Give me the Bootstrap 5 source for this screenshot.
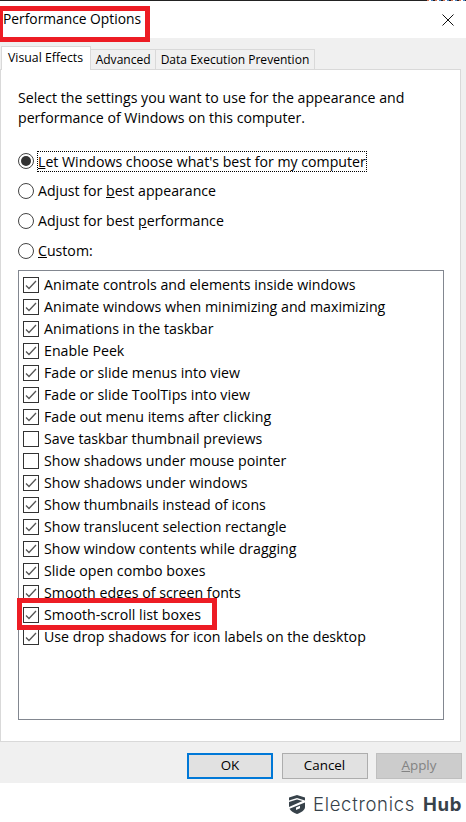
<!DOCTYPE html>
<html lang="en">
<head>
<meta charset="utf-8">
<link rel="stylesheet" href="https://cdn.jsdelivr.net/npm/bootstrap@5.3.0/dist/css/bootstrap.min.css">
<style>
html,body{height:100%;}
body{background:#fff;font-family:"Open Sans","Noto Sans",sans-serif;font-size:14px;color:#000;overflow:hidden;}
.win-frame{width:466px;height:822px;border-top:1px solid #222;}
.top-noise{position:absolute;left:427px;top:-1px;width:39px;height:1px;background:repeating-linear-gradient(90deg,#d9785a 0 2px,#fff 2px 4px,#4a86c8 4px 6px,#222 6px 8px);}
.win-title{height:37px;padding:0 12px 0 3px;font-size:13.8px;}
.win-body{height:745px;background:#f0f0f0;padding:8px 0 0 0;width:466px;}
.tab-strip{height:23px;padding-left:1px;}
.win-tab{border:1px solid #d9d9d9;border-bottom:0;padding:0 4.500px;height:20px;margin-top:3px;margin-left:-1px;line-height:19px;font-size:12.050px;background:#f0f0f0;white-space:nowrap;}
.win-tab.on{background:#fff;height:24px;margin-top:0;margin-left:0;padding:0 7px 0 6px;line-height:21px;font-size:12.300px;position:relative;z-index:1;}
.tab-panel{background:#fff;border:1px solid #d9d9d9;height:673px;margin-top:0;padding:18px 17px 0 17px;width:461px;}
.intro{line-height:20px;font-size:14.15px;margin:0 0 18px;}
.radio-row{height:30px;font-size:14.15px;gap:4px;}
.radio-dot{width:16px;height:16px;border:1px solid #444;border-radius:50%;flex:none;display:flex;align-items:center;justify-content:center;}
.radio-dot.on i{display:block;width:10px;height:10px;border-radius:50%;background:#333;}
.focus-box{outline:1px dotted #000;line-height:19px;}
.u{text-decoration:underline;}
.opts-box{border:1px solid #828790;height:450px;margin-top:4px;width:426px;padding:3px 4px;background:#fff;}
.opt-row{height:22px;gap:5px;font-size:14.2px;white-space:nowrap;}
.chk{width:16px;height:16px;flex:none;display:block;}
.action-row{gap:8.500px;padding:11px 4px 0 0;justify-content:flex-end;width:466px;}
.win-btn{width:86px;height:26px;background:#e1e1e1;border:1px solid #adadad;font-size:13.4px;line-height:23px;text-align:center;}
.win-btn.def{border:2px solid #0078d7;line-height:21px;}
.win-btn.off{background:#cccccc;border-color:#bfbfbf;color:#838383;}
.brand-bar{position:absolute;right:4px;bottom:6px;gap:8px;color:#37424a;font-family:"Inter","Noto Sans",sans-serif;font-size:18.5px;line-height:24px;letter-spacing:.7px;font-weight:300;}
.brand-bar b{font-weight:700;margin-left:2px;}
.marker{position:absolute;border:5px solid #ed1c24;pointer-events:none;}
.mark-a{left:0;top:5px;width:150px;height:36px;border-left-width:3px;}
.mark-b{left:17px;top:597px;width:200px;height:32px;}
</style>
</head>
<body>
<svg width="0" height="0" class="position-absolute"><defs>
<g id="ck"><rect x=".5" y=".5" width="15" height="15" fill="#fff" stroke="#333"/><path d="M3 8.500l3 3 7-7.500" fill="none" stroke="#555" stroke-width="1.300"/></g>
</defs></svg>
<div class="win-frame position-relative">
  <div class="top-noise"></div>
  <div class="win-title d-flex align-items-center justify-content-between">
    <span>Performance Options</span>
    <svg width="12" height="12" viewBox="0 0 12 12"><path d="M.5.500l11 11M11.500.500l-11 11" stroke="#111" stroke-width="1" fill="none"/></svg>
  </div>
  <div class="win-body">
    <div class="tab-strip d-flex align-items-start">
      <div class="win-tab on">Visual Effects</div>
      <div class="win-tab">Advanced</div>
      <div class="win-tab">Data Execution Prevention</div>
    </div>
    <div class="tab-panel">
      <p class="intro">Select the settings you want to use for the appearance and<br>performance of Windows on this computer.</p>
      <div class="radio-row d-flex align-items-center"><span class="radio-dot on"><i></i></span><span class="focus-box"><span class="u">L</span>et Windows choose what's best for my computer</span></div>
      <div class="radio-row d-flex align-items-center"><span class="radio-dot"></span><span>Adjust for <span class="u">b</span>est appearance</span></div>
      <div class="radio-row d-flex align-items-center"><span class="radio-dot"></span><span>Adjust for best <span class="u">p</span>erformance</span></div>
      <div class="radio-row d-flex align-items-center"><span class="radio-dot"></span><span><span class="u">C</span>ustom:</span></div>
      <div class="opts-box">
        <div class="opt-row d-flex align-items-center"><svg class="chk" viewBox="0 0 16 16"><use href="#ck"/></svg><span>Animate controls and elements inside windows</span></div>
        <div class="opt-row d-flex align-items-center"><svg class="chk" viewBox="0 0 16 16"><use href="#ck"/></svg><span>Animate windows when minimizing and maximizing</span></div>
        <div class="opt-row d-flex align-items-center"><svg class="chk" viewBox="0 0 16 16"><use href="#ck"/></svg><span>Animations in the taskbar</span></div>
        <div class="opt-row d-flex align-items-center"><svg class="chk" viewBox="0 0 16 16"><use href="#ck"/></svg><span>Enable Peek</span></div>
        <div class="opt-row d-flex align-items-center"><svg class="chk" viewBox="0 0 16 16"><use href="#ck"/></svg><span>Fade or slide menus into view</span></div>
        <div class="opt-row d-flex align-items-center"><svg class="chk" viewBox="0 0 16 16"><use href="#ck"/></svg><span>Fade or slide ToolTips into view</span></div>
        <div class="opt-row d-flex align-items-center"><svg class="chk" viewBox="0 0 16 16"><use href="#ck"/></svg><span>Fade out menu items after clicking</span></div>
        <div class="opt-row d-flex align-items-center"><svg class="chk" viewBox="0 0 16 16"><rect x=".5" y=".5" width="15" height="15" fill="#fff" stroke="#333"/></svg><span>Save taskbar thumbnail previews</span></div>
        <div class="opt-row d-flex align-items-center"><svg class="chk" viewBox="0 0 16 16"><rect x=".5" y=".5" width="15" height="15" fill="#fff" stroke="#333"/></svg><span>Show shadows under mouse pointer</span></div>
        <div class="opt-row d-flex align-items-center"><svg class="chk" viewBox="0 0 16 16"><use href="#ck"/></svg><span>Show shadows under windows</span></div>
        <div class="opt-row d-flex align-items-center"><svg class="chk" viewBox="0 0 16 16"><use href="#ck"/></svg><span>Show thumbnails instead of icons</span></div>
        <div class="opt-row d-flex align-items-center"><svg class="chk" viewBox="0 0 16 16"><use href="#ck"/></svg><span>Show translucent selection rectangle</span></div>
        <div class="opt-row d-flex align-items-center"><svg class="chk" viewBox="0 0 16 16"><use href="#ck"/></svg><span>Show window contents while dragging</span></div>
        <div class="opt-row d-flex align-items-center"><svg class="chk" viewBox="0 0 16 16"><use href="#ck"/></svg><span>Slide open combo boxes</span></div>
        <div class="opt-row d-flex align-items-center"><svg class="chk" viewBox="0 0 16 16"><use href="#ck"/></svg><span>Smooth edges of screen fonts</span></div>
        <div class="opt-row d-flex align-items-center"><svg class="chk" viewBox="0 0 16 16"><use href="#ck"/></svg><span>Smooth-scroll list boxes</span></div>
        <div class="opt-row d-flex align-items-center"><svg class="chk" viewBox="0 0 16 16"><use href="#ck"/></svg><span>Use drop shadows for icon labels on the desktop</span></div>
      </div>
    </div>
    <div class="action-row d-flex">
      <div class="win-btn def">OK</div>
      <div class="win-btn">Cancel</div>
      <div class="win-btn off"><span class="u">A</span>pply</div>
    </div>
  </div>
  <div class="marker mark-a"></div>
  <div class="marker mark-b"></div>
</div>
<div class="brand-bar d-flex align-items-center">
  <svg width="16" height="19" viewBox="0 0 16 19"><path d="M8 0l8 2.500v3L8 3 0 5.500v-3z" fill="#37424a"/><path d="M0 7l8-2.500L13.500 6 0 12z" fill="#37424a"/><path d="M16 7.500V12c0 3.200-4 5.500-8 7-3.500-1.300-6.500-3-7.500-5.200z" fill="#37424a"/><path d="M7 12.500l4-1.800v2.500l-4 1.800z" fill="#fff"/></svg>
  <span>Electronics <b>Hub</b></span>
</div>
<script src="https://cdn.jsdelivr.net/npm/bootstrap@5.3.0/dist/js/bootstrap.bundle.min.js"></script>
</body>
</html>
